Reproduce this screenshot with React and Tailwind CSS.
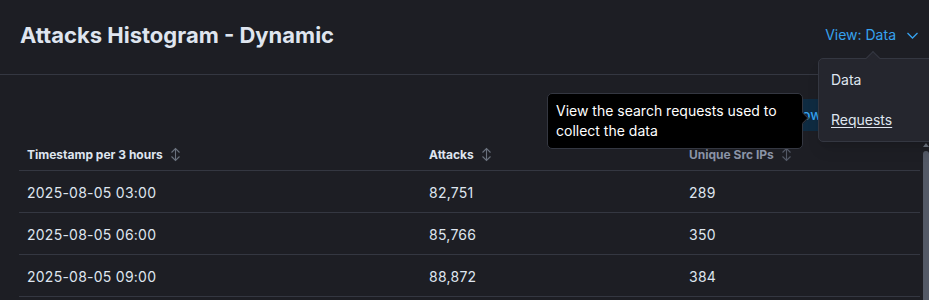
import React from 'react';

const rows = [
  { ts: '2025-08-05 03:00', attacks: '82,751', ips: '289' },
  { ts: '2025-08-05 06:00', attacks: '85,766', ips: '350' },
  { ts: '2025-08-05 09:00', attacks: '88,872', ips: '384' },
];

const SortIcon = ({ className = '' }) => (
  <svg width="11" height="15" viewBox="0 0 11 15" fill="none" stroke="currentColor" strokeWidth="1.1" className={className}>
    <path d="M1.5 5.5 L5.5 1.5 L9.5 5.5" />
    <path d="M1.5 9.5 L5.5 13.5 L9.5 9.5" />
    <path d="M5.5 1.5 L5.5 13.5" />
  </svg>
);

const HeaderCell = ({ label, dim, width }) => (
  <th className={`h-[30px] px-2 text-left font-bold text-xs border-b border-[#343741] ${width}`}>
    <span className={`flex items-center gap-[7px] ${dim ? 'text-[#8a93a6]' : 'text-[#dfe5ef]'}`}>
      {label}
      <SortIcon className={dim ? 'text-[#535966]' : 'text-[#6a717d]'} />
    </span>
  </th>
);

const App = () => {
  return (
    <div className="relative w-[929px] h-[300px] overflow-hidden bg-[#1d1e24] font-['Inter','Liberation_Sans',sans-serif]">
      <header className="h-[75px] border-b border-[#343741] flex items-center justify-between pl-5 pr-[10px] pb-1">
        <h2 className="text-[22px] font-bold text-[#dfe5ef]">Attacks Histogram - Dynamic</h2>
        <button className="flex items-center gap-[10px] text-sm text-[#36a2ef]">
          View: Data
          <svg width="13" height="13" viewBox="0 0 13 13" fill="none" stroke="currentColor" strokeWidth="1.3">
            <path d="M1.5 4 L6.5 9 L11.5 4" />
          </svg>
        </button>
      </header>

      <div className="flex justify-end pr-[25px] pt-6">
        <button className="h-8 px-3 rounded bg-[#0f2b41] text-sm font-medium text-[#36a2ef]">
          Download CSV
        </button>
      </div>

      <div className="ml-[19px] mt-[9px] flex items-start">
        <table className="w-[901px] table-fixed border-collapse">
          <thead>
            <tr>
              <HeaderCell label="Timestamp per 3 hours" width="w-[402px]" />
              <HeaderCell label="Attacks" width="w-[260px]" />
              <HeaderCell label="Unique Src IPs" dim />
            </tr>
          </thead>
          <tbody>
            {rows.map(r => (
              <tr key={r.ts} className="h-[42px] border-b border-[#343741] text-sm text-[#dfe5ef] tracking-[0.25px]">
                <td className="px-2 pt-[3px]">{r.ts}</td>
                <td className="px-2 pt-[3px]">{r.attacks}</td>
                <td className="px-2 pt-[3px]">{r.ips}</td>
              </tr>
            ))}
          </tbody>
        </table>
        <div className="w-[9px] flex flex-col items-center pl-[2px] pt-[3px]">
          <div className="w-0 h-0 border-l-[3px] border-r-[3px] border-b-[4px] border-l-transparent border-r-transparent border-b-[#6a717d]" />
          <div className="mt-[4px] w-[6px] h-[200px] rounded-full bg-[#535966]" />
        </div>
      </div>

      {/* tooltip */}
      <div className="absolute left-[547px] top-[93px] w-[256px] rounded-[5px] border border-[#343741] bg-black px-2 py-[7px] text-sm leading-5 text-white">
        View the search requests used to collect the data
        <div className="absolute right-[-5px] top-[20px] w-2 h-2 rotate-45 bg-black border-t border-r border-[#343741]" />
      </div>

      {/* view menu popover */}
      <div className="absolute left-[818px] top-[58px] w-[130px] h-[84px] rounded-[5px] border border-[#343741] bg-[#25262e] shadow-lg">
        <div className="absolute left-[49px] top-[-6px] w-[10px] h-[10px] rotate-45 bg-[#25262e] border-t border-l border-[#343741]" />
        <div className="flex flex-col pt-[1px] text-sm text-[#dfe5ef]">
          <span className="h-10 flex items-center pl-3">Data</span>
          <span className="h-10 flex items-center pl-3 underline underline-offset-2">Requests</span>
        </div>
      </div>
    </div>
  );
};

export default App;
